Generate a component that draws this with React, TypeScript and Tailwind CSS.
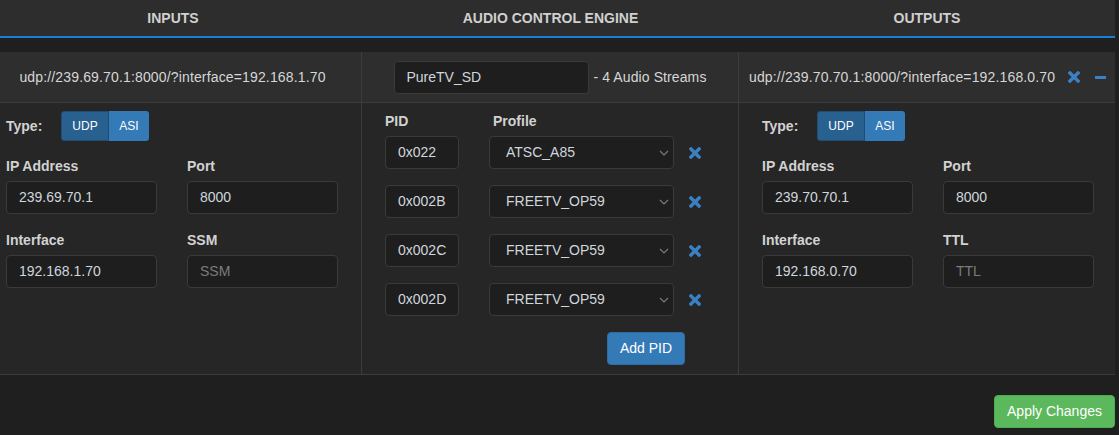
import React from 'react'

const font = { fontFamily: '"Liberation Sans", Arial, sans-serif' }

function XIcon({ className = '' }: { className?: string }) {
  return (
    <svg width="12" height="12" viewBox="0 0 12 12" className={className}>
      <path d="M2 2 L10 10 M10 2 L2 10" stroke="#3a80c2" strokeWidth="3.4" strokeLinecap="square" />
    </svg>
  )
}

function Chevron() {
  return (
    <svg width="10" height="6" viewBox="0 0 10 6" className="absolute right-[4px] top-1/2 -translate-y-1/2">
      <path d="M1 1 L5 5 L9 1" stroke="#7a7a7a" strokeWidth="1.2" fill="none" />
    </svg>
  )
}

function TextBox({ value, placeholder, w }: { value?: string; placeholder?: string; w: string }) {
  return (
    <div
      className={`${w} h-[33px] rounded-[4px] border border-[#3a3a3a] bg-[#1e1e1e] pl-[12px] flex items-center text-[14px] ${
        value ? 'text-[#cfd6dd]' : 'text-[#7c7c7c]'
      }`}
    >
      {value ?? placeholder}
    </div>
  )
}

function Label({ children }: { children: React.ReactNode }) {
  return <div className="h-[20px] leading-[20px] text-[14px] font-bold text-[#d2d2d2] mb-[5px]">{children}</div>
}

function TypeToggle() {
  return (
    <div className="flex items-center h-[30px]">
      <span className="text-[14px] font-bold text-[#d2d2d2] w-[55px]">Type:</span>
      <div className="flex h-[30px] text-[12px] text-white">
        <div className="w-[48px] flex items-center justify-center bg-[#286090] border border-[#204d74] rounded-l-[3px]">UDP</div>
        <div className="w-[40px] flex items-center justify-center bg-[#337ab7] rounded-r-[3px]">ASI</div>
      </div>
    </div>
  )
}

function EndpointForm({ ip, port, iface, last }: { ip: string; port: string; iface: string; last: string }) {
  return (
    <div>
      <TypeToggle />
      <div className="grid grid-cols-[151px_151px] gap-x-[30px] gap-y-[16px] mt-[15px]">
        <div>
          <Label>IP Address</Label>
          <TextBox value={ip} w="w-[151px]" />
        </div>
        <div>
          <Label>Port</Label>
          <TextBox value={port} w="w-[151px]" />
        </div>
        <div>
          <Label>Interface</Label>
          <TextBox value={iface} w="w-[151px]" />
        </div>
        <div>
          <Label>{last}</Label>
          <TextBox placeholder={last} w="w-[151px]" />
        </div>
      </div>
    </div>
  )
}

const pids = [
  { pid: '0x022', profile: 'ATSC_A85' },
  { pid: '0x002B', profile: 'FREETV_OP59' },
  { pid: '0x002C', profile: 'FREETV_OP59' },
  { pid: '0x002D', profile: 'FREETV_OP59' },
]

export default function App() {
  return (
    <div className="w-[1119px] h-[435px] bg-[#1f1f1f] overflow-hidden" style={font}>
      <div className="w-[1115px]">
        {/* Column headings */}
        <div className="h-[38px] bg-[#2d2d2d] border-b-2 border-[#1a7fd4] grid grid-cols-[362px_377px_376px] text-[14px] font-bold text-[#d0d0d0]">
          <div className="flex items-center justify-center pr-[16px]">INPUTS</div>
          <div className="flex items-center justify-center">AUDIO CONTROL ENGINE</div>
          <div className="flex items-center justify-center">OUTPUTS</div>
        </div>

        <div className="mt-[14px] border-b border-[#3c3c3c]">
          {/* Stream row */}
          <div className="grid grid-cols-[362px_377px_376px] h-[51px] bg-[#2e2e2e] border-b border-[#3c3c3c] text-[14px] text-[#d6d6d6]">
            <div className="border-r border-[#3c3c3c] flex items-center justify-center pr-[16px] tracking-[0.15px]">
              udp://239.69.70.1:8000/?interface=192.168.1.70
            </div>
            <div className="border-r border-[#3c3c3c] flex items-center justify-center">
              <div className="w-[195px] h-[33px] rounded-[4px] border border-[#3a3a3a] bg-[#1e1e1e] pl-[12px] flex items-center text-[#cfd6dd]">
                PureTV_SD
              </div>
              <span className="ml-[5px] tracking-[0.1px]">- 4 Audio Streams</span>
            </div>
            <div className="flex items-center pl-[10px]">
              <span className="tracking-[0.15px]">udp://239.70.70.1:8000/?interface=192.168.0.70</span>
              <XIcon className="ml-[13px]" />
              <div className="ml-[15px] w-[11px] h-[3px] bg-[#3a80c2]" />
            </div>
          </div>

          {/* Detail row */}
          <div className="grid grid-cols-[362px_377px_376px] bg-[#262626]">
            <div className="border-r border-[#3c3c3c] pt-[8px] pl-[6px]">
              <EndpointForm ip="239.69.70.1" port="8000" iface="192.168.1.70" last="SSM" />
            </div>
            <div className="border-r border-[#3c3c3c] pt-[8px] pb-[9px] pl-[23px]">
              <div className="flex h-[20px] leading-[20px] text-[14px] font-bold text-[#d2d2d2] mb-[5px]">
                <span className="w-[108px]">PID</span>
                <span>Profile</span>
              </div>
              <div className="flex flex-col gap-[16px]">
                {pids.map((p) => (
                  <div key={p.pid} className="flex items-center">
                    <TextBox value={p.pid} w="w-[74px]" />
                    <div className="relative ml-[30px] w-[185px] h-[33px] rounded-[4px] border border-[#3a3a3a] bg-[#1e1e1e] pl-[16px] flex items-center text-[14px] text-[#cfd6dd]">
                      {p.profile}
                      <Chevron />
                    </div>
                    <XIcon className="ml-[15px]" />
                  </div>
                ))}
              </div>
              <button className="mt-[16px] ml-[222px] w-[78px] h-[33px] rounded-[4px] bg-[#337ab7] border border-[#2e6da4] text-white text-[14px] flex items-center justify-center">
                Add PID
              </button>
            </div>
            <div className="pt-[8px] pl-[23px]">
              <EndpointForm ip="239.70.70.1" port="8000" iface="192.168.0.70" last="TTL" />
            </div>
          </div>
        </div>

        <div className="flex justify-end mt-[20px]">
          <button className="w-[121px] h-[33px] rounded-[4px] bg-[#5cb85c] border border-[#4cae4c] text-white text-[14px] flex items-center justify-center">
            Apply Changes
          </button>
        </div>
      </div>
    </div>
  )
}
